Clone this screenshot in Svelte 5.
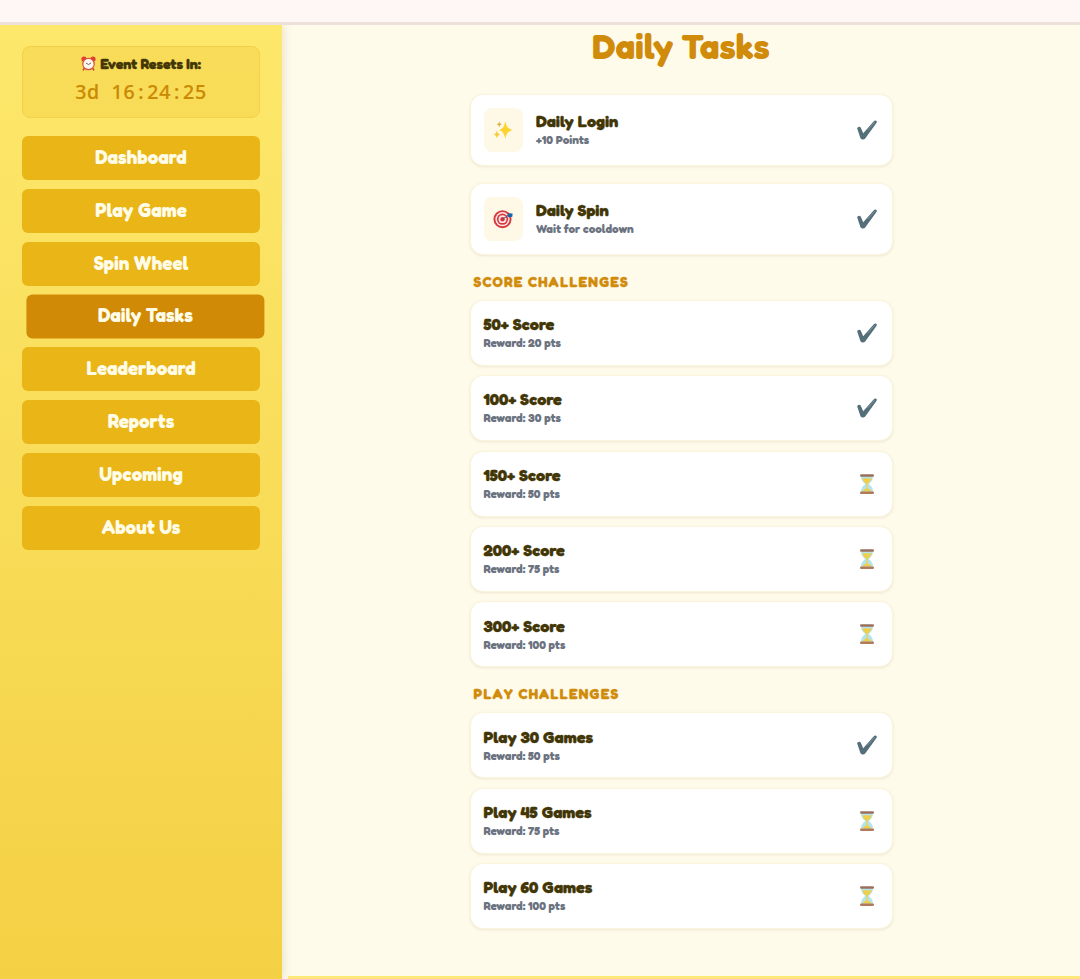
<script lang="ts">
  type Task = {
    title: string;
    note: string;
    done: boolean;
    icon?: 'sparkles' | 'target';
  };

  const navItems = [
    'Dashboard',
    'Play Game',
    'Spin Wheel',
    'Daily Tasks',
    'Leaderboard',
    'Reports',
    'Upcoming',
    'About Us',
  ];
  let active = $state('Daily Tasks');

  const dailyTasks: Task[] = [
    { title: 'Daily Login', note: '+10 Points', done: true, icon: 'sparkles' },
    { title: 'Daily Spin', note: 'Wait for cooldown', done: true, icon: 'target' },
  ];

  const sections: { name: string; tasks: Task[] }[] = [
    {
      name: 'Score Challenges',
      tasks: [
        { title: '50+ Score', note: 'Reward: 20 pts', done: true },
        { title: '100+ Score', note: 'Reward: 30 pts', done: true },
        { title: '150+ Score', note: 'Reward: 50 pts', done: false },
        { title: '200+ Score', note: 'Reward: 75 pts', done: false },
        { title: '300+ Score', note: 'Reward: 100 pts', done: false },
      ],
    },
    {
      name: 'Play Challenges',
      tasks: [
        { title: 'Play 30 Games', note: 'Reward: 50 pts', done: true },
        { title: 'Play 45 Games', note: 'Reward: 75 pts', done: false },
        { title: 'Play 60 Games', note: 'Reward: 100 pts', done: false },
      ],
    },
  ];
</script>

{#snippet status(done: boolean)}
  {#if done}
    <svg class="status" viewBox="0 0 22 22">
      <path
        d="M1.200 9.600C1 8 3.900 6.900 4.700 8.500L7.200 14.200 17.600 2.400C19 .8 21.600 1.700 20.600 3.800L9.200 19.400C8 21 5.200 20.800 4.400 19Z"
        fill="#546e7a"
      />
      <path d="M12 10.700 18.600 3.300" stroke="#7c929c" stroke-width="1" stroke-linecap="round" />
    </svg>
  {:else}
    <svg class="status" viewBox="0 0 22 22">
      <path d="M5 3h12c0 4-1.800 6-4.300 8 2.500 2 4.300 4 4.300 8H5c0-4 1.800-6 4.300-8C6.800 9 5 7 5 3Z" fill="#b5e3ea" />
      <path d="M6.500 5.500c2.500-.8 5.500.6 9.300-.5-.6 2.800-2.300 4.200-4.200 5.700v4.800c2 .4 3.400 1.800 3.900 3h-9c.5-1.200 1.900-2.600 3.900-3v-4.800c-2-1.400-3.400-2.800-3.900-5.200Z" fill="#efce48" />
      <rect x="4" y="1.200" width="14" height="2.500" rx="1.200" fill="#9c6f5c" />
      <rect x="4" y="18.400" width="14" height="2.500" rx="1.200" fill="#b07b5c" />
    </svg>
  {/if}
{/snippet}

{#snippet card(task: Task)}
  <div class="card" class:with-icon={task.icon}>
    {#if task.icon}
      <div class="tile">
        {#if task.icon === 'sparkles'}
          <svg viewBox="0 0 20 20">
            <path d="M12.300 1.200C13.500 6.500 14.500 8.300 19.500 10 14.500 11.700 13.500 13.600 12.300 18.800 11.100 13.600 10.100 11.700 6 10 10.100 8.300 11.100 6.500 12.300 1.200Z" fill="#fdd42f" />
            <path d="M3.900 10.500c.6 2.500 1.200 3.200 3.600 4-2.400.8-3 1.500-3.600 4-.6-2.500-1.200-3.200-3.600-4 2.400-.8 3-1.500 3.600-4Z" fill="#f9cc35" />
            <path d="M6.300 1.200c.4 1.900 1 2.500 2.800 3.100-1.800.6-2.400 1.200-2.800 3.200-.4-2-1-2.600-2.800-3.200 1.800-.6 2.400-1.200 2.800-3.100Z" fill="#ddb048" />
          </svg>
        {:else}
          <svg viewBox="0 0 20 20">
            <circle cx="9.500" cy="10.200" r="9" fill="#d9373b" />
            <circle cx="9.500" cy="10.200" r="7.100" fill="#fbe9e7" />
            <circle cx="9.500" cy="10.200" r="5.600" fill="#d9373b" />
            <circle cx="9.500" cy="10.200" r="3.900" fill="#fbe9e7" />
            <circle cx="9.500" cy="10.200" r="2.200" fill="#d9373b" />
            <path d="M9.500 10.200 15 6.500" stroke="#6b4a5a" stroke-width="1" />
            <path d="M14 6.200 15.800 4.200l3.800.4-.3 3.200-3.600.6Z" fill="#1d66a5" />
          </svg>
        {/if}
      </div>
    {/if}
    <div class="text">
      <div class="title">{task.title}</div>
      <div class="note">{task.note}</div>
    </div>
    {@render status(task.done)}
  </div>
{/snippet}

<div class="page">
  <header></header>
  <div class="body">
    <aside>
      <div class="timer">
        <div class="timer-label">
          <svg viewBox="0 0 15 15">
            <path d="M3.500 12 2 14.300M11.500 12 13 14.300" stroke="#b63a38" stroke-width="1.400" />
            <circle cx="3" cy="3" r="2.600" fill="#df3e35" />
            <circle cx="12" cy="3" r="2.600" fill="#df3e35" />
            <circle cx="7.500" cy="8" r="6.300" fill="#d9553f" />
            <circle cx="7.500" cy="8" r="5.100" fill="#fff8f1" />
            <path d="M5 7 7.500 8.500 10 7" fill="none" stroke="#5f5550" stroke-width=".9" />
          </svg>
          <span>Event Resets In:</span>
        </div>
        <div class="countdown">3d 16<i>:</i>24<i>:</i>25</div>
      </div>
      <nav>
        {#each navItems as item}
          <button class:active={item === active} onclick={() => (active = item)}>{item}</button>
        {/each}
      </nav>
    </aside>
    <main>
      <div class="content">
        <h1>Daily Tasks</h1>
        <div class="daily">
          {#each dailyTasks as task}
            {@render card(task)}
          {/each}
        </div>
        {#each sections as section}
          <h2>{section.name}</h2>
          <div class="list">
            {#each section.tasks as task}
              {@render card(task)}
            {/each}
          </div>
        {/each}
      </div>
      <footer></footer>
    </main>
  </div>
</div>

<style>
  :global(body) {
    margin: 0;
    overflow: hidden;
  }

  .page {
    display: flex;
    flex-direction: column;
    height: 979px;
    overflow: hidden;
    font-family: Fredoka, Inter, sans-serif;
    font-feature-settings: 'cv11';
    font-weight: 700;
    background: #fffbea;
  }

  header {
    flex: none;
    height: 22px;
    background: #fff7f5;
    border-bottom: 3px solid #eee0da;
  }

  .body {
    flex: 1;
    display: flex;
    min-height: 0;
    overflow: hidden;
  }

  aside {
    flex: none;
    box-sizing: border-box;
    width: 282px;
    padding: 21px 22px;
    background: linear-gradient(#fde86c, #f4d044);
    box-shadow: 2px 0 9px rgba(90, 75, 10, 0.13);
  }

  .timer {
    box-sizing: border-box;
    height: 72px;
    padding-top: 6px;
    margin-bottom: 18px;
    border: 1px solid #f2d048;
    border-radius: 8px;
    background: rgba(234, 179, 20, 0.2);
    text-align: center;
  }

  .timer-label {
    display: flex;
    align-items: center;
    justify-content: center;
    gap: 4px;
    height: 20px;
    font-size: 14.200px;
    color: #423606;
    -webkit-text-stroke: 0.3px;
  }

  .timer-label svg {
    width: 15px;
    height: 15px;
  }

  .countdown {
    margin-top: 5px;
    font-family: 'Noto Sans', sans-serif;
    font-size: 19.500px;
    font-weight: 500;
    line-height: 27px;
    letter-spacing: 0.700px;
    word-spacing: 6px;
    color: #ca8a04;
    -webkit-text-stroke: 0.2px;
  }

  .countdown i {
    font-style: normal;
    padding: 0 3px;
  }

  nav {
    display: flex;
    flex-direction: column;
    gap: 8.850px;
  }

  button {
    height: 44px;
    padding: 0 0 2.200px;
    border: none;
    border-radius: 6px;
    background: #eab516;
    color: #fffce8;
    font: inherit;
    font-size: 18.850px;
    font-feature-settings: 'cv11';
    cursor: pointer;
  }

  button.active {
    background: #d18a06;
    transform: translate(4.4px, -0.5px);
  }

  main {
    flex: 1;
    display: flex;
    flex-direction: column;
    align-items: center;
  }

  .content {
    flex: 1;
    width: 423px;
  }

  h1 {
    margin: 0;
    height: 68.700px;
    line-height: 42px;
    font-size: 35.200px;
    text-align: center;
    color: #d08b0b;
  }

  .daily {
    display: flex;
    flex-direction: column;
    gap: 17px;
  }

  .list {
    display: flex;
    flex-direction: column;
    gap: 9.450px;
  }

  .card {
    box-sizing: border-box;
    display: flex;
    align-items: center;
    height: 66px;
    padding: 0 14px 0 13px;
    border: 1px solid #fbf5de;
    border-radius: 13px;
    background: #fff;
    box-shadow: 0 1px 3px rgba(80, 60, 0, 0.1);
  }

  .card.with-icon {
    height: 72px;
  }

  .tile {
    display: flex;
    align-items: center;
    justify-content: center;
    width: 39px;
    height: 44px;
    margin-right: 13.500px;
    border-radius: 8px;
    background: #fef8e7;
  }

  .tile svg {
    width: 20px;
    height: 20px;
  }

  .text {
    flex: 1;
    padding-top: 1.200px;
  }

  .title {
    font-size: 16.400px;
    line-height: 20px;
    color: #423606;
    -webkit-text-stroke: 0.3px;
  }

  .note {
    font-size: 11.800px;
    line-height: 19px;
    color: #6b7280;
  }

  .status {
    width: 22px;
    height: 22px;
    fill: none;
  }

  h2 {
    margin: 0;
    height: 45px;
    padding-left: 4px;
    line-height: 53px;
    font-size: 14.200px;
    letter-spacing: 1.200px;
    text-transform: uppercase;
    color: #d08b0b;
    -webkit-text-stroke: 0.3px;
  }

  footer {
    flex: none;
    align-self: stretch;
    height: 3px;
    margin-left: 6px;
    background: #fde779;
  }
</style>
